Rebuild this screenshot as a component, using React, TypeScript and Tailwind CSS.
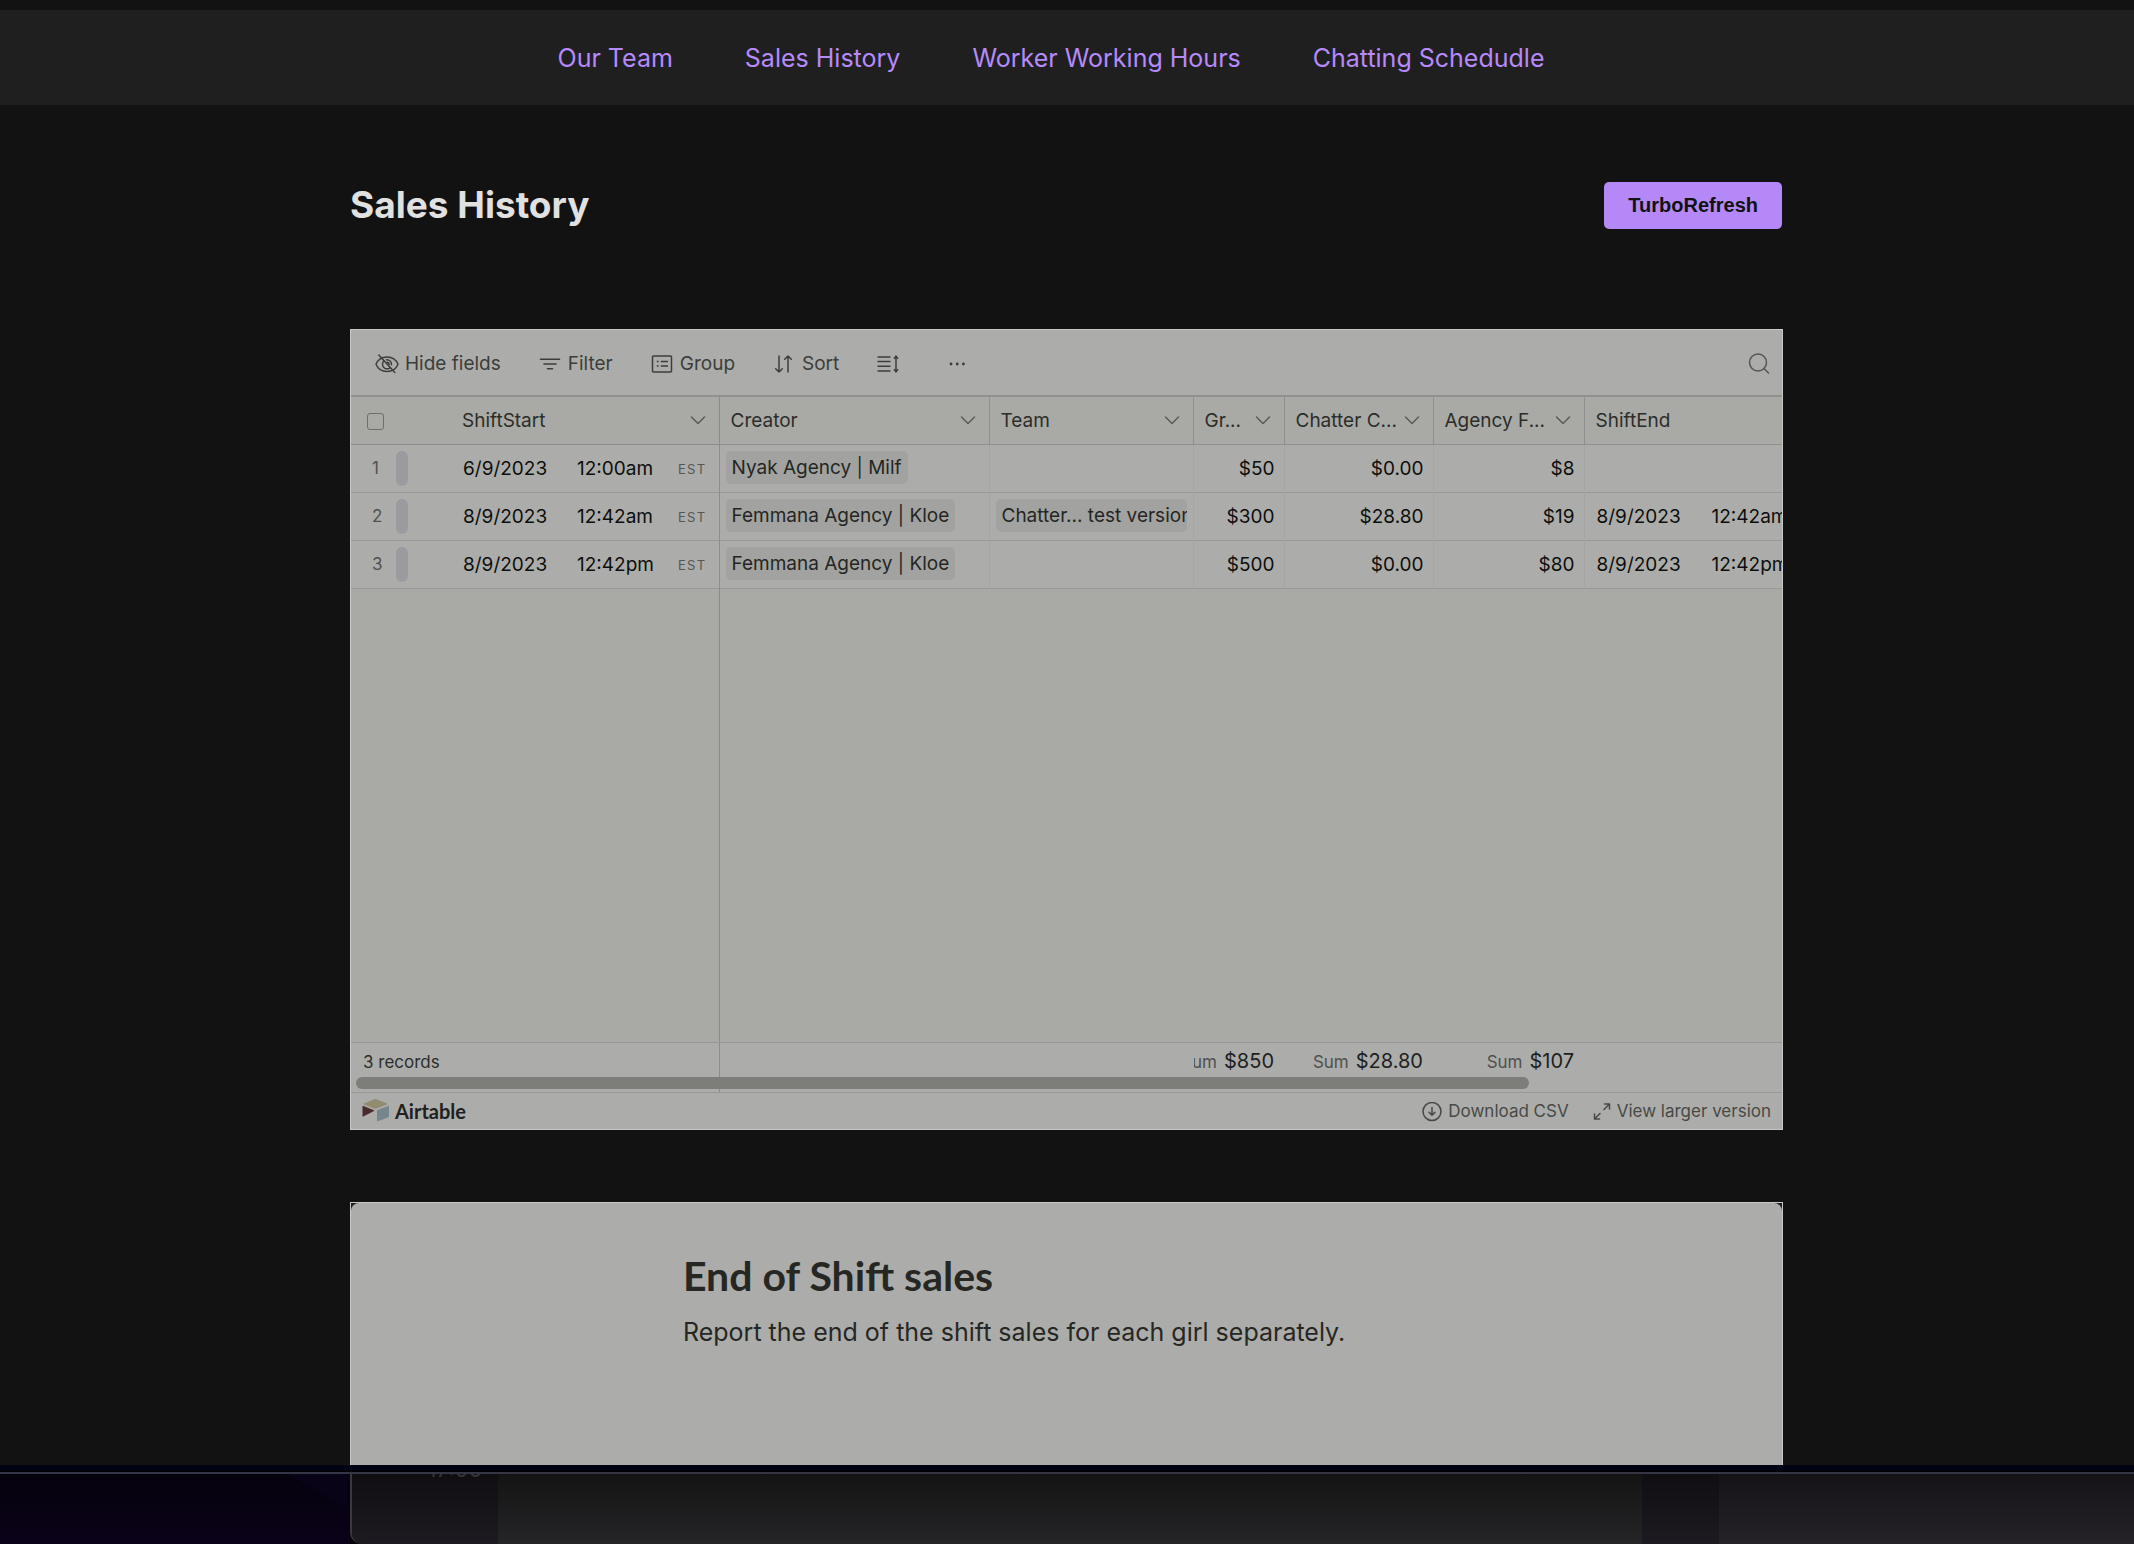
import React from "react";

function HideIcon() {
  return (
    <svg className="size-6" viewBox="0 0 24 24" fill="none" stroke="currentColor" strokeWidth="1.400" strokeLinecap="round" strokeLinejoin="round" aria-hidden="true">
      <path d="M1 11.300C3 6.300 7 4 12 4s9 2.300 11 7.300c-2 5-6 7.200-11 7.200S3 16.300 1 11.300Z" />
      <path d="M9 7.800a4.600 4.600 0 1 0 6.400 6.600M11.500 6.700a4.600 4.600 0 0 1 5 5M12 9.200a2.400 2.400 0 0 1 2.200 2.400" />
      <path d="M3.800 2l16 17.500" />
    </svg>
  );
}

function FilterIcon() {
  return (
    <svg className="size-6" viewBox="0 0 24 24" fill="none" stroke="currentColor" strokeWidth="1.600" strokeLinecap="round" aria-hidden="true">
      <path d="M2.500 6.200h19M6 11h12M9.500 15.700h5" />
    </svg>
  );
}

function GroupIcon() {
  return (
    <svg className="size-6" viewBox="0 0 24 24" fill="none" stroke="currentColor" strokeWidth="1.500" aria-hidden="true">
      <rect x="2.500" y="3" width="19" height="16" rx="1" />
      <path d="M6.800 8.500h1.800M10.800 8.500h7.200M6.800 13h1.800M10.800 13h7.200" />
    </svg>
  );
}

function SortIcon() {
  return (
    <svg className="size-6" viewBox="0 0 24 24" fill="none" stroke="currentColor" strokeWidth="1.500" strokeLinecap="round" strokeLinejoin="round" aria-hidden="true">
      <path d="M7 3v16M3.700 15.800L7 19l3.300-3.200M16 19V3M12.700 6.200L16 3l3.300 3.200" />
    </svg>
  );
}

function RowHeightIcon() {
  return (
    <svg className="size-6" viewBox="0 0 24 24" fill="none" stroke="currentColor" strokeWidth="1.500" aria-hidden="true">
      <path d="M1.500 4h13M1.500 8.500h13M1.500 13.200h13M1.500 18h13M20 4v14" />
      <path d="M18 5.800l2-2.500 2 2.500M18 16.200l2 2.500 2-2.500" />
    </svg>
  );
}

function Chevron() {
  return (
    <svg className="size-4 shrink-0 text-[#5a5b58]" viewBox="0 0 16 16" fill="none" stroke="currentColor" strokeWidth="1.500" strokeLinecap="round" strokeLinejoin="round" aria-hidden="true">
      <path d="M1.500 4l6.500 6.500 6.500-6.500" />
    </svg>
  );
}

function AirtableMark() {
  return (
    <svg className="h-[23px] w-[28px]" viewBox="0 0 28 23" aria-hidden="true">
      <path d="M12 .4a3.500 3.500 0 0 1 3 0l10 4a.6.6 0 0 1 0 1.100l-10.500 4a3.500 3.500 0 0 1-2.500 0L1.800 5.500a.6.6 0 0 1 0-1.100Z" fill="#928b70" />
      <path d="M15 11.500v10.200c0 .5.400.8.900.6L26.500 18.300a1 1 0 0 0 .500-.8V7.500c0-.5-.5-.8-.9-.6L15.500 10.900a.8.8 0 0 0-.5.600Z" fill="#76868d" />
      <path d="M12 12L1.300 17.600C.8 17.900.5 17.600.5 17.100V7.500c0-.5.500-.8 1-.5L12 11.300c.5.200.5.500 0 .700Z" fill="#4a2c30" />
    </svg>
  );
}

const navItems = ["Our Team", "Sales History", "Worker Working Hours", "Chatting Schedudle"];

const columns = [
  { name: "Creator", menu: true },
  { name: "Team", menu: true },
  { name: "Gr...", menu: true },
  { name: "Chatter C...", menu: true },
  { name: "Agency F...", menu: true },
  { name: "ShiftEnd", menu: false },
];

const rows = [
  { start: "6/9/2023", time: "12:00am", creator: "Nyak Agency | Milf", team: "", gross: "$50", cut: "$0.00", fee: "$8", end: "", endTime: "" },
  { start: "8/9/2023", time: "12:42am", creator: "Femmana Agency | Kloe", team: "Chatter... test version", gross: "$300", cut: "$28.80", fee: "$19", end: "8/9/2023", endTime: "12:42am" },
  { start: "8/9/2023", time: "12:42pm", creator: "Femmana Agency | Kloe", team: "", gross: "$500", cut: "$0.00", fee: "$80", end: "8/9/2023", endTime: "12:42pm" },
];

const tools = [
  { label: "Hide fields", icon: <HideIcon /> },
  { label: "Filter", icon: <FilterIcon /> },
  { label: "Group", icon: <GroupIcon /> },
  { label: "Sort", icon: <SortIcon /> },
];

function Chip({ children }: { children: React.ReactNode }) {
  return (
    <span className="block h-[33px] w-fit max-w-full overflow-hidden rounded-[5px] bg-[#a2a3a0] px-[6px] leading-[33px] whitespace-nowrap text-[#252623]">
      {children}
    </span>
  );
}

function Sum({ value }: { value: string }) {
  return (
    <div className="flex items-baseline justify-end gap-[7px] overflow-hidden pr-[11px] whitespace-nowrap">
      <span className="text-[17px] text-[#50514e]">Sum</span>
      <span className="text-xl text-[#20211f]">{value}</span>
    </div>
  );
}

function SalesGrid() {
  const line = "border-[#989996]";
  return (
    <section aria-label="Sales records" className="flex flex-col overflow-hidden border border-[#c9c9c7] bg-[#acadaa] text-[19px]">
      <div className="flex h-[65px] items-center pt-1 pr-[11px] pl-6 text-[#3c3d3b]">
        <div className="flex flex-1 items-center gap-[37px]">
          {tools.map((t) => (
            <button key={t.label} type="button" className="flex items-center gap-[6px]">
              {t.icon}
              {t.label}
            </button>
          ))}
          <button type="button" aria-label="Row height"><RowHeightIcon /></button>
          <button type="button" aria-label="More options" className="ml-2">
            <svg className="size-6" viewBox="0 0 24 24" fill="currentColor" aria-hidden="true">
              <circle cx="6" cy="11" r="1.400" /><circle cx="12.200" cy="11" r="1.400" /><circle cx="18.400" cy="11" r="1.400" />
            </svg>
          </button>
        </div>
        <button type="button" aria-label="Search" className="text-[#555653]">
          <svg className="size-6" viewBox="0 0 24 24" fill="none" stroke="currentColor" strokeWidth="1.500" strokeLinecap="round" aria-hidden="true">
            <circle cx="11" cy="9.500" r="8.500" /><path d="M17 15.500l4.500 4.500" />
          </svg>
        </button>
      </div>
      <table className="w-full table-fixed border-collapse border-t-2 border-[#90918e]">
        <colgroup>
          <col className="w-[368px]" /><col className="w-[270px]" /><col className="w-[204px]" /><col className="w-[91px]" />
          <col className="w-[149px]" /><col className="w-[151px]" /><col />
        </colgroup>
        <thead className="bg-[#a9aaa5] text-[#2c2d2a]">
          <tr className="h-12">
            <th className="border-r border-b border-[#8c8d8a] px-0 pt-0.5 pb-0 font-normal">
              <div className="flex items-center pr-[13px] pl-4">
                <input type="checkbox" aria-label="Select all rows" className="size-[17px] appearance-none rounded-[3px] border border-[#6e6f6c]" />
                <span className="flex-1 pl-[78px] text-left">ShiftStart</span>
                <Chevron />
              </div>
            </th>
            {columns.map((c) => (
              <th key={c.name} className="border-r border-b border-[#8f908d] px-0 pt-0.5 pb-0 font-normal last:border-r-0">
                <div className="flex items-center overflow-hidden pr-[13px] pl-[11px] whitespace-nowrap">
                  <span className="flex-1 text-left">{c.name}</span>
                  {c.menu && <Chevron />}
                </div>
              </th>
            ))}
          </tr>
        </thead>
        <tbody className="text-[#0d0e0c]">
          {rows.map((r, i) => (
            <tr key={i} className={`h-12 border-b ${line}`}>
              <td className="border-r border-r-[#8c8d8a] p-0">
                <div className="flex items-center pl-[21px]">
                  <span className="w-6 pt-0.5 text-[17px] text-[#50514e]">{i + 1}</span>
                  <span className="h-[35px] w-3 rounded-full bg-[#9a9b9f]" />
                  <span className="ml-[55px] w-[114px] shrink-0 pt-0.5 whitespace-nowrap">{r.start}</span>
                  <span className="w-[101px] shrink-0 pt-0.5 whitespace-nowrap">{r.time}</span>
                  <span className="pt-1 text-[13px] tracking-widest text-[#555653]">EST</span>
                </div>
              </td>
              <td className="border-r border-r-[#a5a6a3] px-[6px] pt-0 pb-0.5"><Chip>{r.creator}</Chip></td>
              <td className="border-r border-r-[#a5a6a3] px-[6px] pt-0 pb-0.5">{r.team && <Chip>{r.team}</Chip>}</td>
              <td className="border-r border-r-[#a5a6a3] pt-0.5 pr-[9px] pb-0 pl-0 text-right">{r.gross}</td>
              <td className="border-r border-r-[#a5a6a3] pt-0.5 pr-[9px] pb-0 pl-0 text-right">{r.cut}</td>
              <td className="border-r border-r-[#a5a6a3] pt-0.5 pr-[9px] pb-0 pl-0 text-right">{r.fee}</td>
              <td className="pt-0.5 pr-0 pb-0 pl-3">
                <div className="flex overflow-hidden whitespace-nowrap">
                  <span className="w-[115px] shrink-0">{r.end}</span>
                  <span>{r.endTime}</span>
                </div>
              </td>
            </tr>
          ))}
        </tbody>
      </table>
      <div className="h-[453px] bg-[#a9aaa6]">
        <div className="h-full w-[369px] border-r border-[#8c8d8a]" />
      </div>
      <div className={`relative h-[50px] border-t ${line}`}>
        <div className="grid h-full grid-cols-[369px_474px_91px_149px_151px_1fr]">
          <div className="border-r border-[#8c8d8a] pt-[7px] pl-3 text-[17px] text-[#2c2d2a]">3 records</div>
          <div />
          <div className="pt-1"><Sum value="$850" /></div>
          <div className="pt-1"><Sum value="$28.80" /></div>
          <div className="pt-1"><Sum value="$107" /></div>
        </div>
        <div className="absolute bottom-[3px] left-[5px] h-3 w-[82%] rounded-full bg-[#7d7e79]" />
      </div>
      <footer className={`flex h-[37px] items-center border-t ${line} px-[11px] text-[#484946]`}>
        <a href="#airtable" className="flex flex-1 items-center gap-[5px] font-['Lato'] text-xl font-bold text-[#20211f]">
          <AirtableMark />
          Airtable
        </a>
        <a href="#csv" className="flex items-center gap-[6px] pt-0.5 text-[17px]">
          <svg className="size-5" viewBox="0 0 20 20" fill="none" stroke="currentColor" strokeWidth="1.500" strokeLinecap="round" strokeLinejoin="round" aria-hidden="true">
            <circle cx="10" cy="9.500" r="9" /><path d="M10 5.500V13M7 10.300l3 2.900 3-2.900" />
          </svg>
          Download CSV
        </a>
        <a href="#larger" className="ml-6 flex items-center gap-[6px] pt-0.5 text-[17px]">
          <svg className="size-[18px]" viewBox="0 0 18 18" fill="none" stroke="currentColor" strokeWidth="1.500" strokeLinecap="round" strokeLinejoin="round" aria-hidden="true">
            <path d="M11.500 1h5v5M16.500 1L11 6.500M6.500 16h-5v-5M1.500 16L7 10.500" />
          </svg>
          View larger version
        </a>
      </footer>
    </section>
  );
}

export default function App() {
  return (
    <div className="flex min-h-screen flex-col bg-[#121212] font-['Inter',sans-serif]">
      <nav className="border-t-[10px] border-[#121212] bg-[#1f1f1f]">
        <ul className="flex h-[95px] items-center justify-center gap-[72px] pt-0.5 pr-8 text-[25px] text-[#b68afa]">
          {navItems.map((n) => (
            <li key={n}><a href="#nav">{n}</a></li>
          ))}
        </ul>
      </nav>
      <main className="pr-px">
        <div className="mx-auto max-w-[1433px]">
          <header className="flex h-[224px] items-start justify-between pt-[77px] pr-px">
            <h1 className="text-[37px] leading-[46px] font-bold text-[#e1e1e1]">Sales History</h1>
            <button type="button" className="h-[47px] rounded-[5px] bg-[#b489f7] px-6 pb-0.5 font-['Liberation_Sans'] text-xl font-bold text-[#121212]">TurboRefresh</button>
          </header>
          <SalesGrid />
          <section className="mt-[72px] h-[263px] border border-b-0 border-[#c9c9c7] bg-[#1c1d18]">
            <div className="h-full rounded-t-lg bg-[#acadaa] pt-12 pl-[332px] text-[#262723]">
              <h2 className="font-['Lato'] text-[41px] leading-[50px] font-bold">End of Shift sales</h2>
              <p className="mt-[13px] text-[25px] leading-9">Report the end of the shift sales for each girl separately.</p>
            </div>
          </section>
        </div>
      </main>
      <div className="h-[9px] border-t-[6px] border-b-2 border-t-[#000310] border-b-[#353545] bg-black" />
      <div className="flex min-h-[69px] flex-1 bg-[#05030a]">
        <div className="w-[350px] bg-linear-to-b from-[#05020c] to-[#0b0219]">
          <svg className="ml-auto h-[35px] w-16" viewBox="0 0 64 35" aria-hidden="true">
            <path d="M0 0h64v35Z" fill="#090318" />
          </svg>
        </div>
        <div className="flex flex-1 overflow-hidden rounded-bl-xl border-l-2 border-[#39393d]">
          <div className="flex w-[146px] justify-center overflow-hidden bg-linear-to-b from-[#100e12] to-[#1d1a21]">
            <span className="mt-[-19px] h-6 pl-[60px] text-[22px] leading-7 text-[#35353a]">17:00</span>
          </div>
          <div className="flex-1 bg-linear-to-b from-[#141414] to-[#252427]" />
          <div className="w-[77px] bg-linear-to-b from-[#100e12] to-[#1d1a21]" />
          <div className="w-[415px] bg-linear-to-b from-[#151318] to-[#252228]" />
        </div>
      </div>
    </div>
  );
}
